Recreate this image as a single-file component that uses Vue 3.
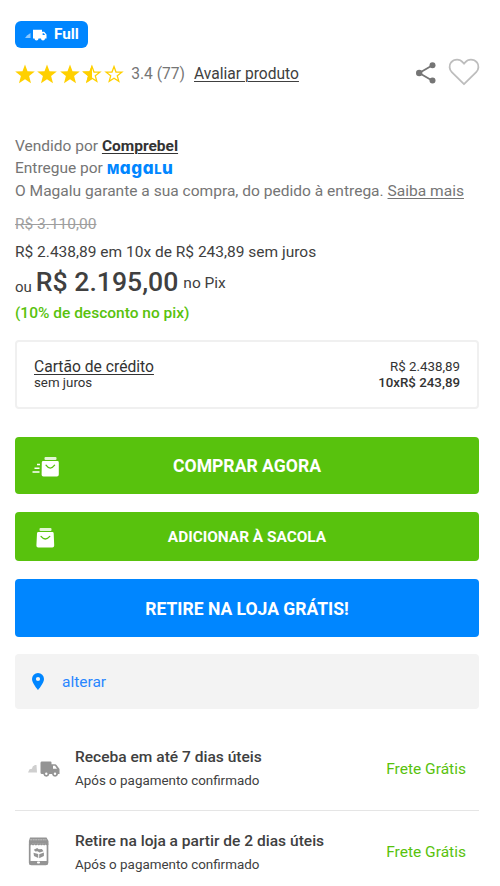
<script setup>
const starPath = 'M10 .6 12.500 7.300 19.800 7.600 14.100 12.100 16 19.200 10 15.200 4 19.200 5.900 12.100.2 7.600 7.500 7.300Z'
const stars = ['full', 'full', 'full', 'half', 'empty']
const deliveries = [
  { icon: 'truck', title: 'Receba em até 7 dias úteis', note: 'Após o pagamento confirmado', price: 'Frete Grátis' },
  { icon: 'store', title: 'Retire na loja a partir de 2 dias úteis', note: 'Após o pagamento confirmado', price: 'Frete Grátis' },
]
</script>

<template>
  <main class="product">
    <div class="full-badge">
      <svg class="badge-truck" width="22" height="12" viewBox="0 0 22 12">
        <path d="M0 9 2 6.500 5.500 4V9Z" fill="#fff" opacity=".55" />
        <path d="M8 .8h9v2h2.200L21.500 5.500v4H20a2 2 0 0 1-4 0h-2.500a2 2 0 0 1-4 0H8Z" fill="#fff" />
        <path d="M17.600 4.200h1.200l1.400 1.700h-2.600Z" fill="#0086ff" />
      </svg>
      <span>Full</span>
    </div>

    <div class="rating-row">
      <div class="stars">
        <svg v-for="(kind, i) in stars" :key="i" width="20" height="20" viewBox="0 0 20 20">
          <path v-if="kind === 'full'" :d="starPath" fill="#ffd000" />
          <path v-if="kind === 'half'" d="M10 .6V15.200L4 19.200 5.900 12.100.2 7.600 7.500 7.300Z" fill="#ffd000" />
          <path v-if="kind !== 'full'" d="M10 2.600 12 8 17.900 8.200 13.300 11.800 14.800 17.400 10 14.300 5.200 17.400 6.700 11.800 2.100 8.200 8 8Z" fill="none" stroke="#ffd000" stroke-width="1.300" />
        </svg>
      </div>
      <span class="score">3.4 (77)</span>
      <a class="review">Avaliar produto</a>
      <svg class="share" width="22" height="24" viewBox="0 0 22 24">
        <path d="M17.500 4.200 4.200 12l13.300 7.800" fill="none" stroke="#757575" stroke-width="1.800" />
        <circle cx="17.500" cy="4.300" r="3" fill="#757575" />
        <circle cx="4.200" cy="12" r="3.200" fill="#757575" />
        <circle cx="17.500" cy="19.500" r="3" fill="#757575" />
      </svg>
      <svg class="heart" width="32" height="28" viewBox="0 0 32 28">
        <path d="M16 26.200 3.800 14.200C1.200 11.600.8 7.200 3.100 4.300 6.200.6 12 .7 14.600 4.100L16 5.700 17.400 4.100C20 .7 25.800.6 28.900 4.300 31.200 7.200 30.800 11.600 28.200 14.200Z" fill="none" stroke="#bdbdbd" stroke-width="1.800" stroke-linejoin="round" />
      </svg>
    </div>

    <section class="seller">
      <p><span class="sold">Vendido por</span> <a class="seller-name">Comprebel</a></p>
      <p class="shipper"><span class="delivered">Entregue por</span><span class="wordmark"><span class="small-cap">M</span>aga<span class="small-cap">L</span>u</span></p>
      <p class="guarantee">O Magalu garante a sua compra, do pedido à entrega. <a>Saiba mais</a></p>
    </section>

    <section class="prices">
      <p class="old-price">R$ 3.110,00</p>
      <p class="installments">R$ 2.438,89 em 10x de R$ 243,89 sem juros</p>
      <p class="pix-price"><span class="or">ou</span><strong>R$ 2.195,00</strong><span class="pix">no Pix</span></p>
      <p class="discount">(10% de desconto no pix)</p>
    </section>

    <section class="card-box">
      <div>
        <a class="card-title">Cartão de crédito</a>
        <p class="card-note">sem juros</p>
      </div>
      <div class="card-values">
        <p class="card-total">R$ 2.438,89</p>
        <p class="card-parcel">10xR$ 243,89</p>
      </div>
    </section>

    <button class="btn buy">
      <svg class="btn-icon" width="28" height="20" viewBox="0 0 28 20">
        <path d="M5 7.500h3M2.500 11.200h5M.5 15h7" stroke="#fff" stroke-width="1.500" />
        <rect x="12.500" y="0" width="12" height="3" rx="1" fill="#e2f5d5" />
        <path d="M11.200 4h14.200q1.400 0 1.400 1.400v12.200q0 1.900-1.900 1.900H11.400q-1.900 0-1.800-1.900L9.800 5.400Q9.800 4 11.200 4Z" fill="#fff" />
        <path d="M14 8.200q4.200 5.800 8.600 0" fill="none" stroke="#58c20d" stroke-width="1.300" stroke-linecap="round" />
      </svg>
      <span>COMPRAR AGORA</span>
    </button>

    <button class="btn bag">
      <svg class="btn-icon" width="28" height="20" viewBox="0 0 28 20">
        <rect x="7.500" y="0" width="12" height="3" rx="1" fill="#e2f5d5" />
        <path d="M6.400 4h14q1.200 0 1.300 1.400l.5 12.200q0 1.900-1.900 1.900H6.200q-1.900 0-1.800-1.900L5 5.400Q5.100 4 6.400 4Z" fill="#fff" />
        <path d="M9 8.400q4.200 5.200 8.800 0" fill="none" stroke="#58c20d" stroke-width="1.300" stroke-linecap="round" />
      </svg>
      <span>ADICIONAR À SACOLA</span>
    </button>

    <button class="btn pickup"><span>RETIRE NA LOJA GRÁTIS!</span></button>

    <div class="location">
      <svg width="12" height="17" viewBox="0 0 12 17">
        <path fill-rule="evenodd" d="M6 0a6 6 0 0 0-6 6c0 4.200 6 11 6 11s6-6.800 6-11A6 6 0 0 0 6 0Zm0 3.900a2.100 2.100 0 1 1 0 4.200 2.100 2.100 0 0 1 0-4.200Z" fill="#0086ff" />
      </svg>
      <a>alterar</a>
    </div>

    <ul class="deliveries">
      <li v-for="item in deliveries" :key="item.icon">
        <svg v-if="item.icon === 'truck'" class="delivery-icon" width="32" height="30" viewBox="0 0 32 30">
          <path d="M0 18.500 1.500 15.200 4 14.700l.7-2.200L7 11h1.500l.5 7.500Z" fill="#cfcfcf" />
          <path fill-rule="evenodd" d="M13.500 7.500h9q1 0 1 1v1.700h3.700q.8 0 1.300.7l3 4.200v5h-1.400a3.100 3.100 0 0 1-6.100 0h-2.600a3.100 3.100 0 0 1-6.100 0h-1.300q-1.500 0-1.500-1.500v-9.600q0-1.500 1-1.500ZM25 11.700v3.100h4l-2-3.100Z" fill="#949494" />
          <circle cx="18.300" cy="19.700" r="1.200" fill="#fff" />
          <circle cx="27" cy="19.700" r="1.200" fill="#fff" />
        </svg>
        <svg v-else class="delivery-icon" width="32" height="30" viewBox="0 0 32 30">
          <path d="M2 .5h16.500L20.500 4v3.500q-1.400 1.700-2.800 0-1.400 1.700-2.800 0-1.400 1.700-2.800 0-1.400 1.700-2.800 0-1.400 1.700-2.800 0-1.400 1.700-2.800 0-1.400 1.700-2.800 0V4Z" fill="#949494" />
          <path d="M2.200 2.800h16.200M4 6.500h13.500" stroke="#d1d1d1" stroke-width=".8" stroke-dasharray="2 .5" />
          <rect x="1.700" y="6" width="17.800" height="21.300" rx="1.500" fill="none" stroke="#949494" stroke-width="1.700" />
          <path d="M1.500 24h18v3.700h-18Z" fill="#949494" />
          <rect x="9" y="24.600" width="3" height="1.900" rx=".9" fill="#fff" />
          <path d="M5.800 12.800 9.200 11l1.500 1.200 3.200-.2 1.600 2.200-4 1.400-2-1.400-2.200.4ZM5.500 15.800l4.700 1.300v4L6 19ZM11.200 17.200l4.700-1.700v3.400l-4.700 2.400Z" fill="#949494" />
        </svg>
        <div class="delivery-copy">
          <p class="delivery-title">{{ item.title }}</p>
          <p class="delivery-note">{{ item.note }}</p>
        </div>
        <span class="free">{{ item.price }}</span>
      </li>
    </ul>
  </main>
</template>

<style>
body { background: #fff; }
</style>

<style scoped>
* { box-sizing: border-box; }
p, ul { margin: 0; padding: 0; }
.product { width: 500px; height: 886px; overflow: hidden; padding: 21px 21px 0 15px; font-family: Roboto, "Liberation Sans", sans-serif; font-size: 15.500px; color: #404040; white-space: nowrap; }
a { text-decoration: underline; text-underline-offset: 2px; text-decoration-thickness: 1px; }
.full-badge { display: flex; align-items: center; width: 73px; height: 27px; padding-left: 10px; border-radius: 6px; background: #0086ff; color: #fff; font-size: 15.300px; font-weight: 700; }
.full-badge span { margin: 0 0 2px 7px; line-height: 22px; }
.rating-row { display: flex; align-items: center; height: 28px; margin-top: 12px; }
.stars { display: flex; gap: 2.300px; }
.score { margin-left: 7px; color: #757575; font-size: 15.600px; }
.review { margin-left: 9px; font-size: 15.600px; }
.share { margin: 0 0 2px auto; }
.heart { margin: 0 -1px 4px 11px; }
.seller { margin-top: 47px; color: #757575; line-height: 22px; height: 66px; }
.seller p { height: 22px; }
.seller .guarantee { padding-top: 1px; font-size: 15.550px; }
.seller-name { color: #333; font-weight: 700; }
.shipper { display: flex; }
.wordmark { margin-left: 4px; color: #0086ff; font-family: Inter, sans-serif; font-size: 17px; font-weight: 800; line-height: 23px; letter-spacing: .6px; font-feature-settings: "cv11"; }
.small-cap { font-size: 13px; }
.prices { padding-top: 11px; }
.old-price { color: #9e9e9e; line-height: 24px; text-decoration: line-through; }
.installments { margin-top: 4px; line-height: 24px; }
.pix-price { display: flex; align-items: center; height: 34px; margin-top: 2px; }
.pix-price strong { margin: 0 5px 3px 4px; font-size: 26.600px; font-weight: 500; }
.or { padding-top: 8px; font-size: 15px; }
.pix { padding-bottom: 1px; font-size: 15.500px; }
.discount { margin-top: 1px; line-height: 24px; color: #58c20d; font-weight: 500; }
.card-box { display: flex; justify-content: space-between; width: 464px; height: 69px; margin-top: 15px; padding: 16px 17px 0; border: 2px solid #f0f0f0; border-radius: 4px; color: #333; }
.card-title { display: block; height: 17px; line-height: 18px; font-size: 15.650px; }
.card-note { line-height: 16px; font-size: 13.300px; }
.card-values { font-size: 13.300px; line-height: 16px; text-align: right; }
.card-total { margin-top: 1px; }
.card-parcel { font-weight: 500; }
.btn { display: flex; align-items: center; width: 464px; padding: 0; border: 0; border-radius: 4px; color: #fff; font-family: inherit; font-weight: 700; background: #58c20d; }
.btn span { flex: 1; text-align: center; }
.btn-icon { margin: 0 -45px 0 17px; }
.buy { height: 57px; margin-top: 28px; font-size: 17.600px; }
.buy .btn-icon { margin-top: 2px; }
.bag { height: 49px; margin-top: 18px; font-size: 15.400px; }
.bag .btn-icon { margin-top: 2px; }
.bag span, .pickup span { padding-top: 1px; }
.pickup { height: 58px; margin-top: 18px; font-size: 17.550px; background: #0086ff; }
.location { display: flex; align-items: center; width: 464px; height: 55px; margin-top: 17px; padding-left: 17px; border-radius: 4px; background: #f3f3f3; }
.location a { margin-left: 18px; color: #2786ff; text-decoration: none; }
.deliveries { width: 464px; margin-top: 18px; list-style: none; }
.deliveries li { display: flex; align-items: center; height: 83px; padding: 0 13px; }
.deliveries li + li { border-top: 1px solid #e5e5e5; }
.delivery-copy { margin: 1px 0 0 15px; }
.delivery-title { line-height: 24px; font-size: 15.550px; font-weight: 500; color: #404040; }
.delivery-note { line-height: 24px; font-size: 13.400px; }
.free { margin-left: auto; color: #58c20d; font-size: 15.550px; }
</style>
